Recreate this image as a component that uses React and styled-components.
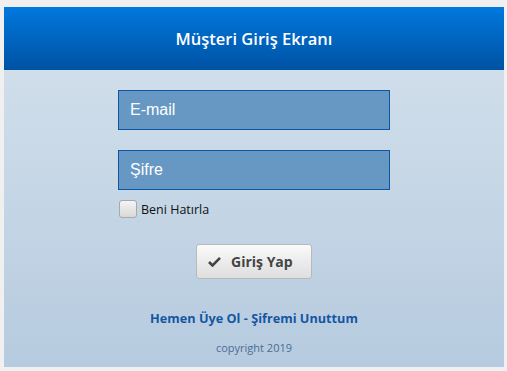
import React from "react";
import styled, { createGlobalStyle } from "styled-components";

const Global = createGlobalStyle`
  html, body { margin: 0; padding: 0; background: #f0f0f0; }
  body { font-family: "Open Sans", "DejaVu Sans", sans-serif; }
`;

const Page = styled.div`
  padding: 7px 3px 4px 4px;
`;

const Panel = styled.div`
  width: 500px;
  height: 360px;
  display: flex;
  flex-direction: column;
  background: linear-gradient(to bottom, #d6e2ed 0%, #b6cbdf 100%);
`;

const Header = styled.div`
  height: 63px;
  display: flex;
  align-items: center;
  justify-content: center;
  background: linear-gradient(to bottom, #0078de 0%, #0052a3 100%);
  color: #fff;
  font-size: 16.5px;
  font-weight: 600;
  padding-bottom: 1px;
  box-sizing: border-box;
`;

const Form = styled.div`
  display: flex;
  flex-direction: column;
  align-items: center;
  padding-top: 20px;
`;

const Field = styled.div`
  width: 272px;
  display: flex;
  flex-direction: column;
  gap: 10px;
  margin-bottom: ${(p) => p.$mb || 0}px;
`;

const Input = styled.input`
  box-sizing: border-box;
  width: 272px;
  height: 40px;
  border: 1px solid #0c56a4;
  background: #6698c3;
  color: #fff;
  font-family: "Liberation Sans", Arial, sans-serif;
  font-size: 16px;
  padding: 0 11px;
  outline: none;
  &::placeholder { color: #fff; opacity: 1; }
`;

const CheckRow = styled.label`
  display: flex;
  align-items: center;
  gap: 4px;
  height: 18px;
  font-size: 12.5px;
  color: #111;
`;

const Box = styled.span`
  box-sizing: border-box;
  width: 18px;
  height: 18px;
  border: 1px solid #a8a8a8;
  border-radius: 3px;
  background: linear-gradient(to bottom, #f4f4f4, #d9d9d9);
  margin-left: 1px;
`;

const Button = styled.button`
  box-sizing: border-box;
  width: 116px;
  height: 35px;
  margin-top: 26px;
  border: 1px solid #b9b9b9;
  border-radius: 3px;
  background: linear-gradient(to bottom, #fafafa, #dedede);
  color: #444;
  font-family: "Open Sans", sans-serif;
  font-weight: 700;
  font-size: 14px;
  display: flex;
  align-items: center;
  justify-content: flex-start;
  gap: 10px;
  padding: 0 0 0 11px;
`;

const Links = styled.div`
  margin-top: 30px;
  color: #1656a1;
  font-size: 12.7px;
  line-height: 18px;
  font-weight: 700;
`;

const Copy = styled.div`
  margin-top: 13px;
  color: #4b6c93;
  font-size: 11px;
  line-height: 15px;
`;

export default function App() {
  return (
    <Page>
      <Global />
      <Panel>
        <Header>Müşteri Giriş Ekranı</Header>
        <Form>
          <Field $mb={20}>
            <Input placeholder="E-mail" />
          </Field>
          <Field>
            <Input placeholder="Şifre" type="password" />
            <CheckRow>
              <Box />
              Beni Hatırla
            </CheckRow>
          </Field>
          <Button>
            <svg width="13" height="11" viewBox="0 0 13 11">
              <path d="M1 6 L4.5 9.5 L12 1.8" fill="none" stroke="#444" strokeWidth="2.6" />
            </svg>
            Giriş Yap
          </Button>
          <Links>Hemen Üye Ol - Şifremi Unuttum</Links>
          <Copy>copyright 2019</Copy>
        </Form>
      </Panel>
    </Page>
  );
}
